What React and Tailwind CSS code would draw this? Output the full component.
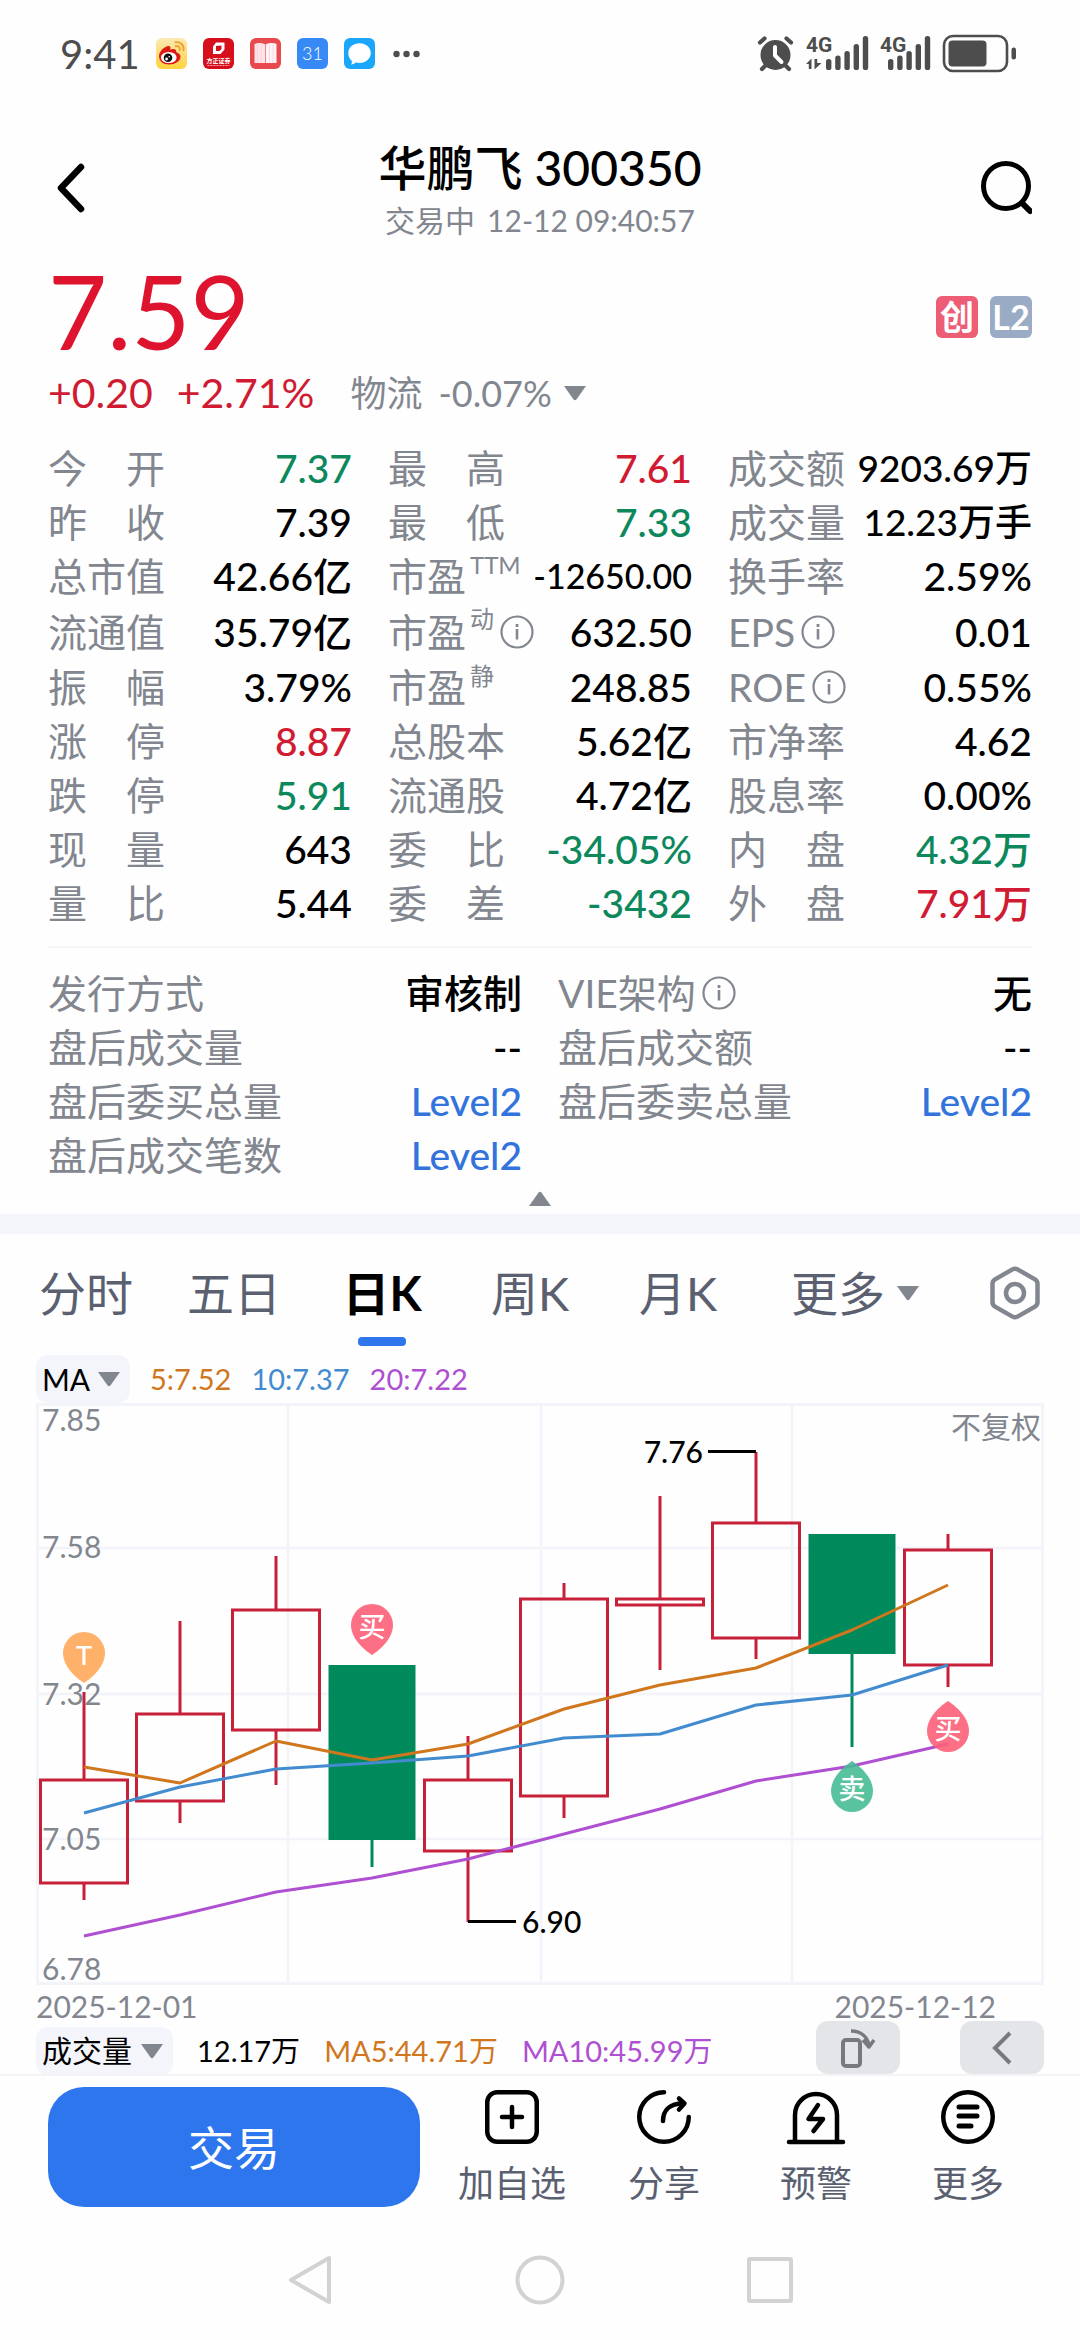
import React from "react";

const TONES = {
  up: "text-[#d01b33]",
  down: "text-[#0c885c]",
  flat: "text-black",
};

const SIZES = {
  small: "text-[34px]",
  compact: "text-[37px]",
  normal: "text-[39px]",
};

const QUOTES = [
  [
    { label: "今　开", value: "7.37", tone: "down" },
    { label: "最　高", value: "7.61", tone: "up" },
    { label: "成交额", value: "9203.69万", size: "compact" },
  ],
  [
    { label: "昨　收", value: "7.39" },
    { label: "最　低", value: "7.33", tone: "down" },
    { label: "成交量", value: "12.23万手", size: "compact" },
  ],
  [
    { label: "总市值", value: "42.66亿" },
    { label: "市盈", sup: "TTM", value: "-12650.00", size: "small" },
    { label: "换手率", value: "2.59%" },
  ],
  [
    { label: "流通值", value: "35.79亿" },
    { label: "市盈", sup: "动", info: true, value: "632.50" },
    { label: "EPS", info: true, value: "0.01" },
  ],
  [
    { label: "振　幅", value: "3.79%" },
    { label: "市盈", sup: "静", value: "248.85" },
    { label: "ROE", info: true, value: "0.55%" },
  ],
  [
    { label: "涨　停", value: "8.87", tone: "up" },
    { label: "总股本", value: "5.62亿" },
    { label: "市净率", value: "4.62" },
  ],
  [
    { label: "跌　停", value: "5.91", tone: "down" },
    { label: "流通股", value: "4.72亿" },
    { label: "股息率", value: "0.00%" },
  ],
  [
    { label: "现　量", value: "643" },
    { label: "委　比", value: "-34.05%", tone: "down" },
    { label: "内　盘", value: "4.32万", tone: "down" },
  ],
  [
    { label: "量　比", value: "5.44" },
    { label: "委　差", value: "-3432", tone: "down" },
    { label: "外　盘", value: "7.91万", tone: "up" },
  ],
];

const AFTER_HOURS = [
  { label: "发行方式", value: "审核制" },
  { label: "VIE架构", info: true, value: "无" },
  { label: "盘后成交量", value: "--" },
  { label: "盘后成交额", value: "--" },
  { label: "盘后委买总量", value: "Level2", link: true },
  { label: "盘后委卖总量", value: "Level2", link: true },
  { label: "盘后成交笔数", value: "Level2", link: true },
];

const CANDLES = [
  { open: 6.97, close: 7.16, high: 7.32, low: 6.94 },
  { open: 7.12, close: 7.28, high: 7.45, low: 7.08 },
  { open: 7.25, close: 7.47, high: 7.57, low: 7.15 },
  { open: 7.37, close: 7.05, high: 7.37, low: 7.0 },
  { open: 7.03, close: 7.16, high: 7.24, low: 6.9 },
  { open: 7.13, close: 7.49, high: 7.52, low: 7.09 },
  { open: 7.48, close: 7.49, high: 7.68, low: 7.36 },
  { open: 7.42, close: 7.63, high: 7.76, low: 7.38 },
  { open: 7.61, close: 7.39, high: 7.61, low: 7.22 },
  { open: 7.37, close: 7.58, high: 7.61, low: 7.33 },
];

const MA5 = [364, 380, 338, 357, 341, 306, 282, 265, 227, 182];
const MA10 = [410, 384, 366, 360, 353, 335, 331, 302, 292, 262];
const MA20 = [533, 512, 489, 475, 456, 431, 406, 378, 363, 341];

const xAt = (i) => 48 + 96 * i;
const yAt = (price) => Math.round(49 + (7.76 - price) * 546);
const points = (ys) => ys.map((y, i) => `${xAt(i)},${y}`).join(" ");

function Triangle({ up = false, className = "" }) {
  return (
    <svg viewBox="0 0 22 15" className={`h-[15px] w-[22px] shrink-0 ${className}`} aria-hidden="true">
      <path d={up ? "M0 15 9.6 1.4q1.4-1.4 2.8 0L22 15z" : "M0 0h22L12.4 13.6q-1.4 1.4-2.8 0z"} fill="#82868f" />
    </svg>
  );
}

function InfoIcon() {
  return (
    <svg viewBox="0 0 34 34" className="h-[34px] w-[34px] shrink-0" fill="none" stroke="#82868f" aria-hidden="true">
      <circle cx="17" cy="17" r="15.5" strokeWidth="2.2" />
      <path d="M17 14v10.5" strokeWidth="2.6" />
      <path d="M17 9v3" strokeWidth="2.8" />
    </svg>
  );
}

function AppIcons() {
  return (
    <div className="flex items-center gap-4" aria-hidden="true">
      <svg viewBox="0 0 31 31" className="h-[31px] w-[31px]">
        <defs>
          <linearGradient id="weibo" x1="0" y1="0" x2="0" y2="1">
            <stop offset="0" stopColor="#fbe9b4" />
            <stop offset="1" stopColor="#ffd23c" />
          </linearGradient>
        </defs>
        <rect width="31" height="31" rx="6" fill="url(#weibo)" />
        <path d="M3 18C3 13 10 7 13.500 8.200c1.500.6 1 2.600.6 3.600 2.600-1.200 6.400-1.200 6 1.800-.2 1.200 4.400 1.400 4.400 5.400 0 4-5.500 7.500-11.500 7.500S3 23 3 18z" fill="#dd1a16" />
        <ellipse cx="12.800" cy="19.500" rx="7.800" ry="5.600" fill="#fff" />
        <circle cx="12" cy="19.800" r="4.300" fill="#111" />
        <circle cx="10.600" cy="21" r="1.400" fill="#fff" />
        <circle cx="13.200" cy="18.800" r=".8" fill="#fff" />
        <path d="M19.500 4.200c5-.8 8.800 3 8 8M19.800 8c2.600-.4 4.400 1.600 4 4" fill="none" stroke="#f0a12c" strokeWidth="1.900" strokeLinecap="round" />
      </svg>
      <svg viewBox="0 0 31 31" className="h-[31px] w-[31px]">
        <rect width="31" height="31" rx="6" fill="#d70f1c" />
        <path d="M13 4.500h8.500v7L17.500 16H10V8.500zM13 8v5h3.500L18.500 11V7.500z" fill="#fff" fillRule="evenodd" />
        <text x="15.500" y="25" fontSize="6" fontWeight="700" textAnchor="middle" fill="#fff">方正证券</text>
        <path d="M4.500 27.500h22" stroke="#f3a7aa" strokeDasharray="2 1" />
      </svg>
      <svg viewBox="0 0 31 31" className="h-[31px] w-[31px]">
        <rect width="31" height="31" rx="6" fill="#e8494f" />
        <path d="M4.500 6c3-1.500 8-1.500 10.700.5V25H4.500z" fill="#fde3e8" />
        <path d="M26.500 6c-3-1.500-8-1.500-10.700.5V25h10.700z" fill="#fff3f5" />
        <path d="M7.500 5v20M11.500 5v20M19.500 5v20M23 5v20" stroke="#f9cfd7" strokeWidth=".7" />
      </svg>
      <svg viewBox="0 0 31 31" className="h-[31px] w-[31px]">
        <rect width="31" height="31" rx="6" fill="#3789f6" />
        <text x="15.500" y="22" fontSize="18" fontWeight="300" textAnchor="middle" fill="#fff">31</text>
      </svg>
      <svg viewBox="0 0 31 31" className="h-[31px] w-[31px]">
        <rect width="31" height="31" rx="6" fill="#1aa6fb" />
        <path d="M15.500 5.200c6.500 0 11.300 4.300 11.300 9.900S22 25 15.500 25c-1.300 0-2.600-.2-3.800-.5-1.400 1.200-3 1.900-4.800 1.900 1-.8 1.200-2.200.8-3.600C5.500 21 4.300 18.200 4.300 15.100c0-5.600 4.700-9.900 11.200-9.900z" fill="#fff" />
      </svg>
      <svg viewBox="0 0 27 8" className="ml-0.5 h-2 w-[27px]" fill="#4d4d4d">
        <circle cx="3.500" cy="4" r="3.200" />
        <circle cx="13.500" cy="4" r="3.200" />
        <circle cx="23.500" cy="4" r="3.200" />
      </svg>
    </div>
  );
}

function Signal({ data = false }) {
  const start = data ? 20 : 8;
  const tops = [24, 20.5, 16, 9, 1];
  return (
    <svg viewBox={data ? "0 0 62 37" : "0 0 50 37"} className={data ? "h-[37px] w-[62px] overflow-visible" : "h-[37px] w-[50px] overflow-visible"} fill="#4d4d4d">
      <text x="0" y="17" fontSize="21" fontWeight="700" fontFamily="Roboto, sans-serif">4G</text>
      {tops.map((top, i) => (
        <rect key={top} x={start + i * 9.2} y={top} width="5.400" height={35 - top} rx="2.600" />
      ))}
      {data && <path d="M0 29l5.500-5.500V34h-2.700v-5zM8.500 24h2.700v4h4.300L8.500 34.500z" />}
    </svg>
  );
}

function StatusIcons() {
  return (
    <div className="flex items-center" aria-hidden="true">
      <svg viewBox="0 0 37 37" className="mr-3 h-[37px] w-[37px]" fill="none" stroke="#4d4d4d" strokeLinecap="round">
        <circle cx="18.500" cy="20" r="15" fill="#4d4d4d" stroke="none" />
        <path d="M3 7.500 7.500 3.500M34 7.500l-4.500-4M5 34l4-4M32 34l-4-4" strokeWidth="4.200" />
        <path d="M18 12v8.500l6.500 6.500" stroke="#fff" strokeWidth="4" strokeLinejoin="round" />
      </svg>
      <Signal data />
      <div className="w-3" />
      <Signal />
      <svg viewBox="0 0 75 40" className="ml-3 h-10 w-[75px]">
        <rect x="2" y="2" width="63" height="35" rx="9" fill="none" stroke="#4d4d4d" strokeWidth="2.600" />
        <rect x="6.500" y="6.500" width="38" height="26" rx="4" fill="#4d4d4d" />
        <rect x="69.500" y="13.500" width="4.500" height="12" rx="2.200" fill="#4d4d4d" />
      </svg>
    </div>
  );
}

function Quote({ label, sup, info, value, tone = "flat", size = "normal" }) {
  return (
    <div className="flex items-center justify-between whitespace-nowrap">
      <dt className="flex items-center self-stretch text-[39px] text-[#82868f]">
        {label}
        {sup && <sup className="top-0 ml-1 self-start text-2xl leading-8">{sup}</sup>}
        {info && <span className="ml-1.5"><InfoIcon /></span>}
      </dt>
      <dd className={`font-medium ${SIZES[size]} ${TONES[tone]}`}>{value}</dd>
    </div>
  );
}

function Marker({ x, y, below = false, color, text }) {
  return (
    <g transform={`translate(${x} ${y})`}>
      <path
        d={below ? "M0 0C3 2 21 14 21 30A21 21 0 0 1-21 30C-21 14-3 2 0 0z" : "M0 51C3 49 21 37 21 21A21 21 0 0 0-21 21C-21 37-3 49 0 51z"}
        fill={color}
        fillOpacity=".9"
      />
      <text x="0" y={below ? 38 : 33} fontSize="27" fontWeight="500" textAnchor="middle" fill="#fff">{text}</text>
    </g>
  );
}

function CandleChart() {
  return (
    <svg viewBox="0 0 1008 582" className="block w-full overflow-visible" role="img" aria-label="日K线图" fontSize="30">
      <g stroke="#f3f4f9" strokeWidth="3" fill="none">
        <rect x="1.500" y="1.500" width="1005" height="579" />
        <path d="M252 0v582M505 0v582M756 0v582M0 145h1008M0 291h1008M0 436h1008" strokeWidth="2.500" />
      </g>
      {CANDLES.map((c, i) => {
        const rising = c.close >= c.open;
        const top = yAt(Math.max(c.open, c.close));
        const bottom = yAt(Math.min(c.open, c.close));
        const color = rising ? "#c62138" : "#008a5c";
        const x = xAt(i);
        return (
          <g key={x} stroke={color} strokeWidth="3">
            <path d={`M${x} ${yAt(c.high)}V${top}M${x} ${bottom}V${yAt(c.low)}`} />
            {rising ? (
              <rect x={x - 43.5} y={top} width="87" height={bottom - top} fill="none" />
            ) : (
              <rect x={x - 43.5} y={top} width="87" height={bottom - top} fill={color} stroke="none" />
            )}
          </g>
        );
      })}
      <g fill="none" strokeWidth="3" strokeLinejoin="round">
        <polyline points={points(MA5)} stroke="#d0771e" />
        <polyline points={points(MA10)} stroke="#438bcf" />
        <polyline points={points(MA20)} stroke="#af4fd2" />
      </g>
      <g fill="#82868f">
        <text x="6" y="28">7.85</text>
        <text x="6" y="155">7.58</text>
        <text x="6" y="302">7.32</text>
        <text x="6" y="447">7.05</text>
        <text x="6" y="577">6.78</text>
        <text x="1005" y="35" textAnchor="end">不复权</text>
      </g>
      <path d="M672 48.500h48M432 518.500h48" stroke="#000" strokeWidth="3" />
      <g fontWeight="500">
        <text x="667" y="60" textAnchor="end">7.76</text>
        <text x="486" y="530">6.90</text>
      </g>
      <Marker x={48} y={229} color="#ffa959" text="T" />
      <Marker x={336} y={201} color="#fc5f77" text="买" />
      <Marker x={816} y={358} below color="#47bb95" text="卖" />
      <Marker x={912} y={298} below color="#fc5f77" text="买" />
    </svg>
  );
}

function Picker({ label, options, className }) {
  return (
    <div className="relative">
      <select aria-label={label} className={`block h-12 appearance-none rounded-xl bg-[#f4f5fa] pl-1.5 text-[30px] text-black ${className}`}>
        {options.map((o) => <option key={o}>{o}</option>)}
      </select>
      <Triangle className="pointer-events-none absolute top-[17px] right-2.5" />
    </div>
  );
}

function Action({ label, children }) {
  return (
    <button type="button" className="flex flex-col items-center gap-4 text-4xl leading-[46px] text-[#5a6070]">
      <svg viewBox="0 0 54 54" className="h-[54px] w-[54px] overflow-visible" fill="none" stroke="#000" strokeWidth="4.500" strokeLinecap="round" strokeLinejoin="round" aria-hidden="true">
        {children}
      </svg>
      {label}
    </button>
  );
}

export default function App() {
  return (
    <div className="flex min-h-screen w-full flex-col bg-[#fefefe] font-['Lato','Noto_Sans_CJK_SC',sans-serif] text-black">
      <div className="flex h-[107px] items-center justify-between pr-[63px] pl-[60px]">
        <div className="flex items-center gap-4">
          <span className="text-[40px] leading-none text-[#4d4d4d]">9:41</span>
          <AppIcons />
        </div>
        <StatusIcons />
      </div>

      <header className="flex h-[162px] items-center justify-between px-12">
        <button type="button" aria-label="返回" className="flex w-14 pl-2">
          <svg viewBox="0 0 30 50" className="h-[50px] w-[30px]" fill="none" stroke="#000" strokeWidth="6.500" strokeLinecap="round" strokeLinejoin="round">
            <path d="M25 4 5 25l20 21" />
          </svg>
        </button>
        <div className="pt-1 text-center">
          <h1 className="text-5xl leading-[60px] font-medium">华鹏飞 300350</h1>
          <p className="flex justify-center gap-3 text-[30px] leading-[44px] text-[#82868f]">
            <span>交易中</span>
            <time>12-12 09:40:57</time>
          </p>
        </div>
        <button type="button" aria-label="搜索">
          <svg viewBox="0 0 56 56" className="h-14 w-14" fill="none" stroke="#000" strokeWidth="5" strokeLinecap="round">
            <circle cx="30" cy="26" r="22.500" />
            <path d="m47 44 7 7" strokeWidth="6" />
          </svg>
        </button>
      </header>

      <section className="px-12">
        <div className="flex items-center justify-between">
          <strong className="text-[102px] leading-[84px] font-normal text-[#de142e]">7.59</strong>
          <div className="mt-3 flex gap-3 text-[34px] leading-[42px] font-bold text-white">
            <span className="w-[42px] rounded-md bg-[#ed5d75] text-center">创</span>
            <span className="w-[42px] rounded-md bg-[#9aabc5] text-center">L2</span>
          </div>
        </div>
        <div className="mt-2 flex h-16 items-center text-[41px] text-[#d01b33]">
          <span>+0.20</span>
          <span className="ml-6">+2.71%</span>
          <button type="button" className="ml-9 flex items-center text-4xl text-[#82868f]">
            物流<span className="ml-4">-0.07%</span>
            <Triangle className="ml-3" />
          </button>
        </div>

        <dl className="mt-4 grid grid-cols-3 grid-rows-[54px_54px_54px_57px_54px_54px_54px_54px_54px] gap-x-9 leading-[54px]">
          {QUOTES.flat().map((q) => <Quote key={q.label + (q.sup || "")} {...q} />)}
        </dl>

        <dl className="mt-4 grid auto-rows-[54px] grid-cols-2 gap-x-9 border-t-2 border-[#f7f7f9] pt-[18px] leading-[54px]">
          {AFTER_HOURS.map((r) => (
            <div key={r.label} className="flex items-center justify-between text-[39px]">
              <dt className="flex items-center gap-1.5 text-[#82868f]">{r.label}{r.info && <InfoIcon />}</dt>
              <dd className="font-medium">
                {r.link ? <a href="#level2" className="text-[#3273dc]">{r.value}</a> : r.value}
              </dd>
            </div>
          ))}
        </dl>
        <button type="button" aria-label="收起" className="flex h-8 w-full items-center justify-center">
          <Triangle up />
        </button>
      </section>

      <div className="h-5 bg-[#f4f5fa]" />

      <nav className="grid h-28 grid-cols-[148fr_148fr_148fr_148fr_148fr_206fr_113fr] pt-1.5 pr-[9px] pl-3 text-[47px] text-[#5a6070]">
        <button type="button">分时</button>
        <button type="button">五日</button>
        <button type="button" aria-current="true" className="relative font-bold text-black">
          日K
          <span className="absolute bottom-0 left-1/2 h-[9px] w-12 -translate-x-1/2 rounded bg-[#2d76ee]" />
        </button>
        <button type="button">周K</button>
        <button type="button">月K</button>
        <button type="button" className="flex items-center justify-center gap-3">更多<Triangle /></button>
        <button type="button" aria-label="图表设置" className="flex items-center justify-center">
          <svg viewBox="0 0 54 54" className="h-[54px] w-[54px]" fill="none" stroke="#82868f" strokeWidth="4.500" strokeLinejoin="round">
            <path d="M24.500 3.400q2.500-1.400 5 0l17.500 10q2.500 1.500 2.500 4.300v18.600q0 2.800-2.500 4.300l-17.500 10q-2.500 1.400-5 0L7 40.600q-2.500-1.500-2.500-4.300V17.700q0-2.800 2.500-4.300z" />
            <circle cx="27" cy="27" r="9" />
          </svg>
        </button>
      </nav>

      <section className="px-9 pt-[9px]">
        <div className="flex h-12 items-center gap-5 text-[29px]">
          <Picker label="主图指标" options={["MA", "BOLL"]} className="w-[94px]" />
          <span className="text-[#d0771e]">5:7.52</span>
          <span className="text-[#438bcf]">10:7.37</span>
          <span className="text-[#af4fd2]">20:7.22</span>
        </div>
        <CandleChart />
        <div className="flex h-[42px] items-center justify-between pr-12 text-[30px] leading-none text-[#82868f]">
          <span>2025-12-01</span>
          <span>2025-12-12</span>
        </div>
        <div className="relative flex h-[47px] items-center gap-6 text-[29px]">
          <Picker label="副图指标" options={["成交量", "MACD"]} className="w-[137px]" />
          <span>12.17万</span>
          <span className="text-[#d0771e]">MA5:44.71万</span>
          <span className="text-[#af4fd2]">MA10:45.99万</span>
          <div className="absolute right-0 bottom-0 flex gap-[60px]">
            <button type="button" aria-label="横屏" className="flex h-[53px] w-[84px] items-center justify-center rounded-xl bg-[#e4e5e9]">
              <svg viewBox="0 0 36 40" className="h-10 w-9" fill="none" stroke="#77797c" strokeWidth="4" strokeLinejoin="round">
                <rect x="3" y="12" width="17" height="26" rx="3" />
                <path d="M11 3c9 0 16 5 18 14M23 12l6 7 5-7" strokeWidth="3.500" />
              </svg>
            </button>
            <button type="button" aria-label="展开" className="flex h-[53px] w-[84px] items-center justify-center rounded-xl bg-[#e4e5e9]">
              <svg viewBox="0 0 20 34" className="h-[34px] w-5" fill="none" stroke="#77797c" strokeWidth="4">
                <path d="M18 2 3 17l15 15" />
              </svg>
            </button>
          </div>
        </div>
      </section>

      <footer className="flex h-[145px] items-start gap-4 border-t-2 border-[#f3f4f6] pt-[11px] pr-9 pl-12">
        <button type="button" className="h-[120px] flex-[372] rounded-[36px] bg-[#2d76ee] text-[46px] text-white">交易</button>
        <div className="mt-[3px] grid flex-[608] grid-cols-4">
          <Action label="加自选">
            <rect x="2.250" y="2.250" width="49.500" height="49.500" rx="10" />
            <path d="M27 17v20M17 27h20" />
          </Action>
          <Action label="分享">
            <path d="M27 2.250A24.750 24.750 0 1 0 51.750 27" />
            <path d="M26 31C26 20 33 13.500 46 13.500M42 8.500l5.500 5-5.500 6" />
          </Action>
          <Action label="预警">
            <path d="M6 51V25a21 21 0 0 1 42 0v26M0 52h54" />
            <path d="M29 15l-9.500 14H34l-9.500 12" />
          </Action>
          <Action label="更多">
            <circle cx="27" cy="27" r="24.750" />
            <path d="M18 17h18M18 26h18M18 36h12" strokeWidth="5" />
          </Action>
        </div>
      </footer>

      <div className="flex h-[121px] items-center justify-center text-[#d2d2d2]">
        <button type="button" aria-label="系统返回" className="mr-[180px]">
          <svg viewBox="0 0 50 50" className="block h-[50px] w-[50px]" fill="none" stroke="currentColor" strokeWidth="4" strokeLinejoin="round">
            <path d="M44 3v44L6 25z" />
          </svg>
        </button>
        <button type="button" aria-label="主屏幕">
          <svg viewBox="0 0 50 50" className="block h-[50px] w-[50px]" fill="none" stroke="currentColor" strokeWidth="4">
            <circle cx="25" cy="25" r="22.500" />
          </svg>
        </button>
        <button type="button" aria-label="最近任务" className="ml-[180px]">
          <svg viewBox="0 0 50 50" className="block h-[50px] w-[50px]" fill="none" stroke="currentColor" strokeWidth="4" strokeLinejoin="round">
            <rect x="4" y="4" width="42" height="42" rx="1" />
          </svg>
        </button>
      </div>
    </div>
  );
}
